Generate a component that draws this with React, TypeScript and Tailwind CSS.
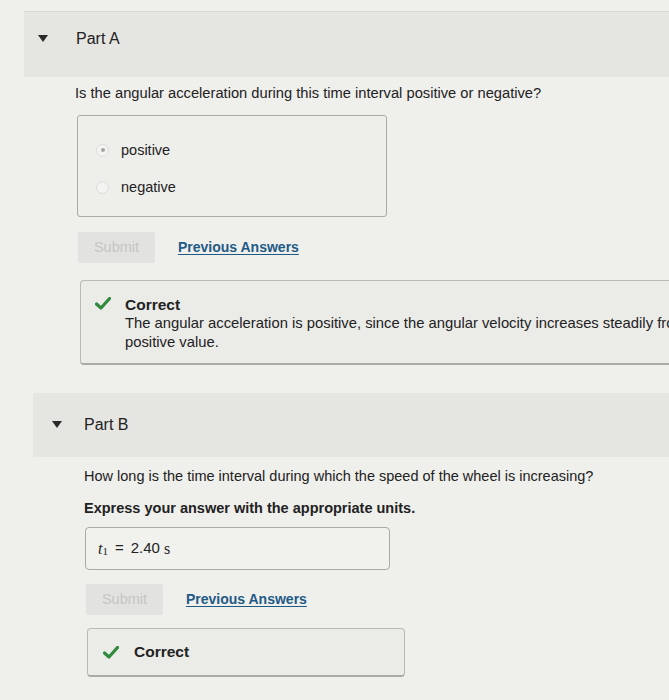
import React from "react";

function Caret() {
  return (
    <svg width="10" height="8" viewBox="0 0 10 8" className="shrink-0">
      <path d="M0 0 L10 0 L5 7 Z" fill="#2b2b2b" />
    </svg>
  );
}

function Check() {
  return (
    <svg width="16" height="13" viewBox="0 0 16 13" className="shrink-0">
      <path d="M1.5 7 L6 11 L14.5 1.5" fill="none" stroke="#2f8a3e" strokeWidth="3.2" strokeLinecap="round" strokeLinejoin="round" />
    </svg>
  );
}

function Radio({ checked }: { checked?: boolean }) {
  return (
    <span className="w-[13px] h-[13px] rounded-full border border-[#dcdcda] bg-[#f3f3f1] flex items-center justify-center shrink-0">
      {checked && <span className="w-[4px] h-[4px] rounded-full bg-[#a4a4a2]" />}
    </span>
  );
}

function SubmitRow({ left }: { left: string }) {
  return (
    <div className={`flex items-center ${left}`}>
      <div className="w-[77px] h-[31px] bg-[#e2e2e0] rounded-[2px] flex items-center justify-center text-[14.5px] text-[#c6c6c4]">
        Submit
      </div>
      <a className="ml-[23px] text-[14px] font-bold text-[#1f5a86] underline underline-offset-2 decoration-[#1f5a86]">
        Previous Answers
      </a>
    </div>
  );
}

export default function App() {
  return (
    <div className="w-[669px] h-[700px] overflow-hidden bg-[#efefec] text-[#222] font-['Liberation_Sans',Arial,sans-serif]">
      <div className="pt-[11px] pl-[24px]">
        <div className="h-[66px] border-t border-[#d8d8d5] bg-[#e5e5e2] flex items-start pt-[18px] pl-[14px]">
          <div className="h-[18px] flex items-center">
            <Caret />
          </div>
          <span className="ml-[28px] text-[16px] leading-[18px]">Part A</span>
        </div>
      </div>

      <div className="pl-[75px] mt-[8px] text-[14.7px] leading-[16px]">
        Is the angular acceleration during this time interval positive or negative?
      </div>

      <div className="ml-[77px] mt-[14px] w-[310px] h-[102px] border border-[#a9a9a6] rounded-[3px] bg-[#eeeeeb] pl-[18px] pt-[26px] flex flex-col gap-[21px]">
        <div className="flex items-center gap-[12px] text-[14.5px] leading-[16px]">
          <Radio checked />
          <span>positive</span>
        </div>
        <div className="flex items-center gap-[12px] text-[14.5px] leading-[16px]">
          <Radio />
          <span>negative</span>
        </div>
      </div>

      <div className="mt-[15px]">
        <SubmitRow left="ml-[78px]" />
      </div>

      <div className="ml-[80px] mt-[17px] w-[620px] h-[85px] border border-[#b9b9b6] border-b-2 border-b-[#a9a9a6] rounded-[4px] bg-[#ebebe8] pl-[14px] pt-[14px] flex gap-[14px]">
        <div className="pt-[2px]">
          <Check />
        </div>
        <div className="text-[14.8px] leading-[19px]">
          <div className="text-[15.5px] font-bold">Correct</div>
          <div className="whitespace-nowrap">
            The angular acceleration is positive, since the angular velocity increases steadily from a small
          </div>
          <div>positive value.</div>
        </div>
      </div>

      <div className="pl-[33px] mt-[28px]">
        <div className="h-[64px] bg-[#e5e5e2] flex items-center pl-[19px]">
          <Caret />
          <span className="ml-[22px] text-[16px]">Part B</span>
        </div>
      </div>

      <div className="pl-[84px] mt-[11px] text-[14.5px] leading-[16px]">
        How long is the time interval during which the speed of the wheel is increasing?
      </div>
      <div className="pl-[84px] mt-[16px] text-[14.5px] leading-[16px] font-bold">
        Express your answer with the appropriate units.
      </div>

      <div className="ml-[85px] mt-[11px] w-[305px] h-[43px] border border-[#a9a9a6] rounded-[4px] bg-[#f1f1ee] flex items-center pl-[12px] text-[15px]">
        <span className="font-['Liberation_Serif',serif] italic text-[16px]">t</span>
        <span className="font-['Liberation_Serif',serif] text-[11px] relative top-[3px]">1</span>
        <span className="ml-[7px]">=</span>
        <span className="ml-[7px]">2.40</span>
        <span className="ml-[4px] font-['Liberation_Serif',serif] text-[16px]">s</span>
      </div>

      <div className="mt-[14px]">
        <SubmitRow left="ml-[86px]" />
      </div>

      <div className="ml-[87px] mt-[13px] w-[318px] h-[49px] border border-[#b9b9b6] border-b-2 border-b-[#a9a9a6] rounded-[4px] bg-[#ebebe8] flex items-center pl-[15px] gap-[15px]">
        <Check />
        <span className="text-[15.5px] font-bold">Correct</span>
      </div>
    </div>
  );
}
